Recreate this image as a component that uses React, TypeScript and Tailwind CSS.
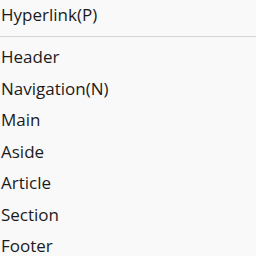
export default function App() {
  const items = ["Header", "Navigation(N)", "Main", "Aside", "Article", "Section", "Footer"];
  return (
    <div className="w-[256px] h-[256px] bg-[#f9f9f9] overflow-hidden text-[#1b1b1b] text-[17px]" style={{ fontFamily: '"Open Sans", sans-serif' }}>
      <div className="h-[31px] leading-[29px] pl-[1px]">Hyperlink(P)</div>
      <div className="h-[1px] bg-[#d6d6d6] mt-[5px] mb-[4px]" />
      <div className="flex flex-col">
        {items.map((t) => (
          <div key={t} className="h-[31.5px] leading-[32px] pl-[1px]">{t}</div>
        ))}
      </div>
    </div>
  );
}
